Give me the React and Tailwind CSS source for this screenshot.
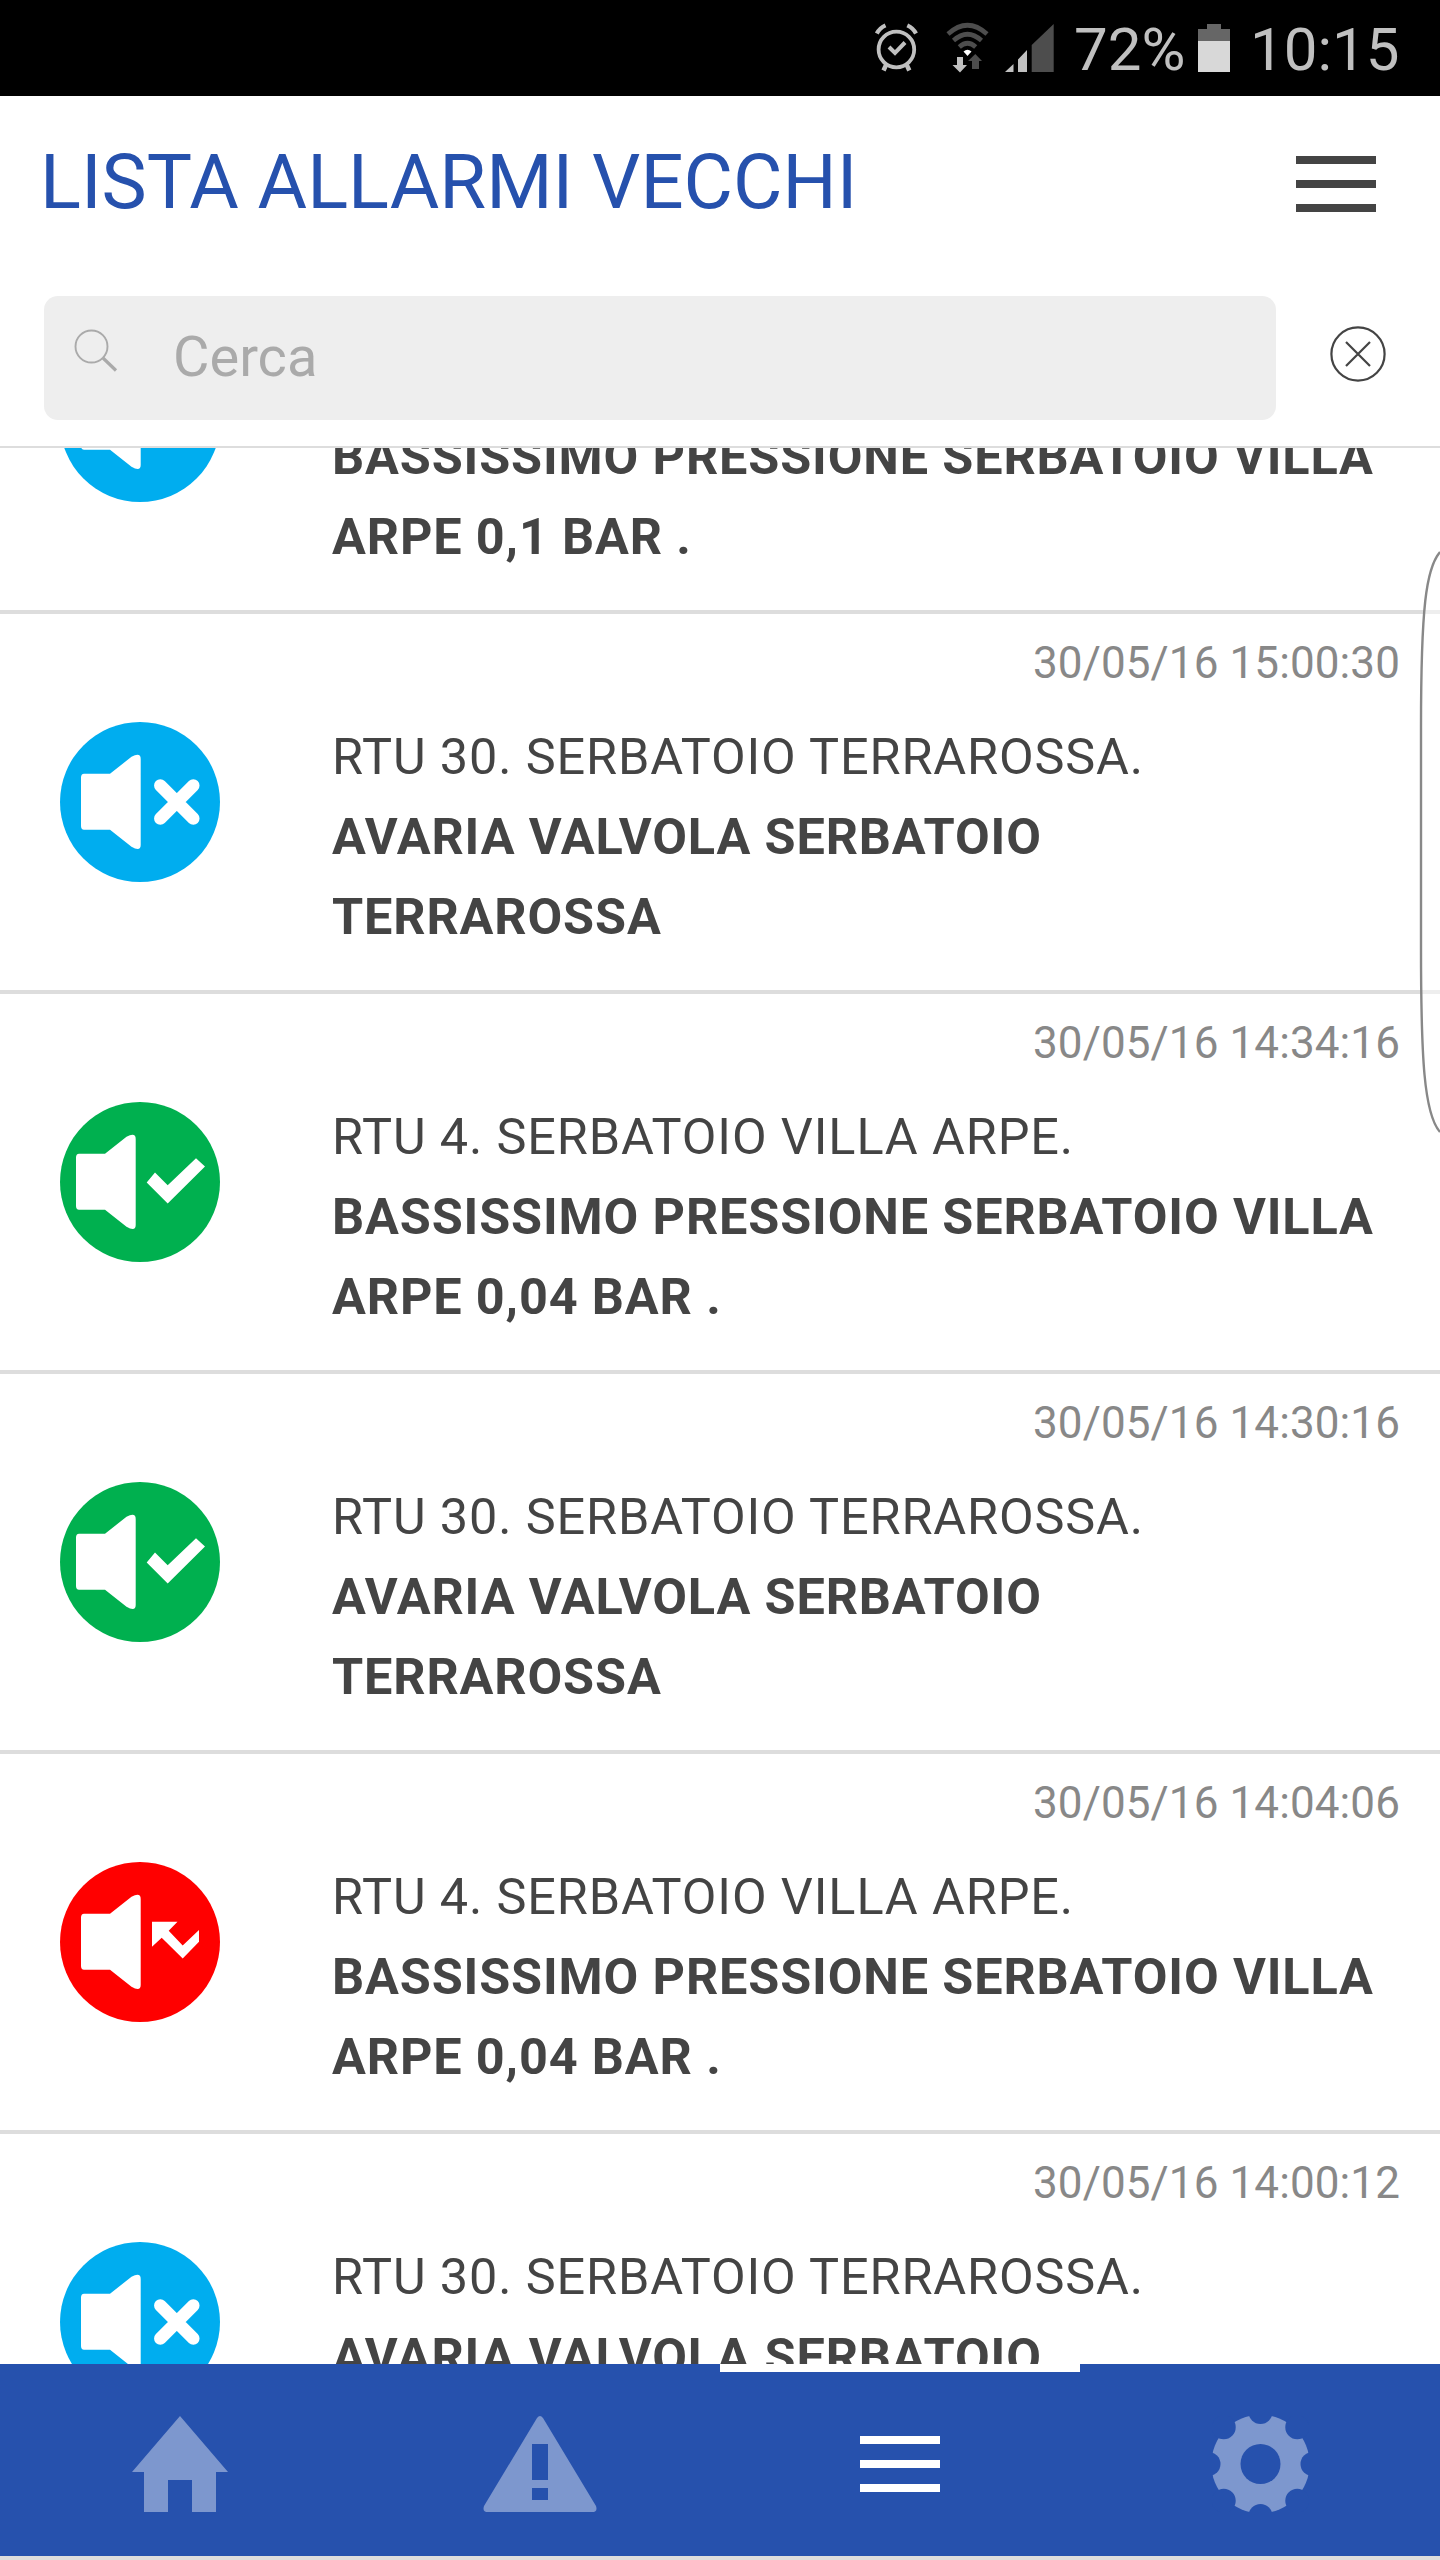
const alarms = [
  { time: '30/05/16 15:04:30', status: 'off', title: 'RTU 4. SERBATOIO VILLA ARPE.', text: 'BASSISSIMO PRESSIONE SERBATOIO VILLA ARPE 0,1 BAR .' },
  { time: '30/05/16 15:00:30', status: 'off', title: 'RTU 30. SERBATOIO TERRAROSSA.', text: 'AVARIA VALVOLA SERBATOIO TERRAROSSA' },
  { time: '30/05/16 14:34:16', status: 'ack', title: 'RTU 4. SERBATOIO VILLA ARPE.', text: 'BASSISSIMO PRESSIONE SERBATOIO VILLA ARPE 0,04 BAR .' },
  { time: '30/05/16 14:30:16', status: 'ack', title: 'RTU 30. SERBATOIO TERRAROSSA.', text: 'AVARIA VALVOLA SERBATOIO TERRAROSSA' },
  { time: '30/05/16 14:04:06', status: 'missed', title: 'RTU 4. SERBATOIO VILLA ARPE.', text: 'BASSISSIMO PRESSIONE SERBATOIO VILLA ARPE 0,04 BAR .' },
  { time: '30/05/16 14:00:12', status: 'off', title: 'RTU 30. SERBATOIO TERRAROSSA.', text: 'AVARIA VALVOLA SERBATOIO TERRAROSSA' },
]

const colors = { off: '#00adef', ack: '#00b04f', missed: '#ff0000' }

function AlarmIcon({ status }) {
  return (
    <svg viewBox="0 0 160 160" className="w-40 h-40 shrink-0" fill="#fff">
      <circle cx="80" cy="80" r="80" fill={colors[status]} />
      <path
        transform={status === 'ack' ? 'translate(-5 0)' : undefined}
        d="M24 51.7H50L71.5 34.8Q80.7 30 80.7 37V123Q80.7 130 71.5 124.8L50 107.7H24Q21 107.7 21 104V55.5Q21 51.7 24 51.7Z"
      />
      {status === 'off' && (
        <path d="M100.3 63.5L133.3 96.5M133.3 63.5L100.3 96.5" stroke="#fff" strokeWidth="12.5" strokeLinecap="round" />
      )}
      {status === 'ack' && <path d="M86.7 80.5L95 70.5L107.7 83.3L136 56.3L145 64.5L107.7 101.5Z" />}
      {status === 'missed' && (
        <path d="M92 59.7H117.5L108.7 68.7L122.7 83.5L139 68V79.7L122.7 96.5L101.7 75.7L92 84.7Z" />
      )}
    </svg>
  )
}

function StatusBar() {
  return (
    <div className="h-24 bg-black text-[#c0c0c0] text-[60px] leading-[92px] flex items-center shrink-0">
      <svg viewBox="870 0 190 96" className="w-[190px] h-24 ml-[870px]" fill="none">
        {/* alarm clock */}
        <g stroke="#c0c0c0">
          <circle cx="896.4" cy="49.5" r="17.8" strokeWidth="3.8" />
          <path d="M889 47L895 53L905 42.5" strokeWidth="4" />
          <path d="M876.8 33.5Q879.5 28 885.5 25.3M907.3 25.3Q913.3 28 916 33.5" strokeWidth="4.2" />
          <path d="M886.5 64L883.5 70.5M906.3 64L909.3 70.5" strokeWidth="4.5" />
        </g>
        {/* wifi */}
        <g stroke="#4d4d4d" strokeWidth="4.6">
          <path d="M948 34Q967.5 16.5 987 34" />
          <path d="M953.5 40.5Q967.5 28 981.5 40.5" />
          <path d="M959.3 47Q967.5 39.5 975.7 47" />
        </g>
        <path d="M963.5 51.5Q967.5 48 971.5 51.5L967.5 56Z" fill="#fff" />
        <path d="M957 57H963V65H967L960 72.5L952.5 65H957Z" fill="#c0c0c0" />
        <path d="M972 69V61H968L975.3 54L982 61H979V69Z" fill="#4d4d4d" />
        {/* signal */}
        <path d="M1005 72L1013.5 64V72ZM1018 72V59.5L1027 50V72Z" fill="#c0c0c0" />
        <path d="M1031.7 72V45L1053.7 24V72Z" fill="#4d4d4d" />
      </svg>
      <span className="ml-[14px] pt-1 w-[124px] whitespace-nowrap">72%</span>
      <svg viewBox="0 0 32 48" className="w-8 h-12" shapeRendering="crispEdges">
        <path d="M9 0H23V5H32V17H0V5H9Z" fill="#666" />
        <path d="M0 17H32V48H0Z" fill="#d8d8d8" />
      </svg>
      <span className="ml-5 pt-1 whitespace-nowrap">10:15</span>
    </div>
  )
}

function Header() {
  return (
    <header className="h-[352px] shrink-0 border-b-2 border-[#ddd]">
      <div className="h-[200px] pl-10 pr-16 flex items-start justify-between">
        <h1 className="mt-9 text-[76px] leading-[100px] text-[#2651ad] whitespace-nowrap">LISTA ALLARMI VECCHI</h1>
        <button className="mt-[60px] w-20 flex flex-col gap-4">
          <span className="h-2 bg-[#444]" />
          <span className="h-2 bg-[#444]" />
          <span className="h-2 bg-[#444]" />
        </button>
      </div>
      <div className="pl-11 flex items-start">
        <div className="w-[1232px] h-[124px] rounded-[14px] bg-[#eee] flex items-center">
          <svg viewBox="0 0 44 44" className="w-11 h-11 ml-[30px] mb-[14px]" fill="none" stroke="#aaa">
            <circle cx="17.5" cy="17.5" r="16" strokeWidth="1.9" />
            <path d="M29 29L42 41.5" strokeWidth="3.2" />
          </svg>
          <span className="ml-[55px] mb-[3px] text-[56px] text-[#aaa]">Cerca</span>
        </div>
        <svg viewBox="0 0 56 56" className="w-14 h-14 ml-[54px] mt-[30px]" fill="none" stroke="#444" strokeWidth="2.2">
          <circle cx="28" cy="28" r="26.6" />
          <path d="M16 16L40 40M40 16L16 40" />
        </svg>
      </div>
    </header>
  )
}

function AlarmRow({ alarm }) {
  return (
    <li className="h-[380px] border-b-4 border-[#ddd] text-[#444]">
      <p className="h-[103px] pr-10 pt-[22px] text-right text-[44px] leading-[54px] tracking-[0.1px] text-[#888]">
        {alarm.time}
      </p>
      <div className="flex pl-[60px]">
        <div className="pt-[5px] mr-28">
          <AlarmIcon status={alarm.status} />
        </div>
        <div className="w-[1050px] text-[50.4px] leading-[80px] tracking-[0.87px]">
          <p>{alarm.title}</p>
          <p className="font-bold">{alarm.text}</p>
        </div>
      </div>
    </li>
  )
}

function TabBar() {
  return (
    <nav className="h-[196px] shrink-0 grid grid-cols-4 bg-[#2651ad] border-b-4 border-[#ddd]">
      <div className="flex justify-center pt-[52px]">
        <svg viewBox="0 0 96 96" className="w-24 h-24" fill="#7d97ce">
          <path d="M48 0L96 56H84V96H60V64H36V96H12V56H0Z" />
        </svg>
      </div>
      <div className="flex justify-center pt-[52px]">
        <svg viewBox="0 0 114 96" className="w-[114px] h-24" fill="#7d97ce" fillRule="evenodd">
          <path d="M54 2Q57 -2 60 2L113 90Q115 96 109 96H5Q-1 96 1 90ZM49 28V64H65V28ZM49 72V84H65V72Z" />
        </svg>
      </div>
      <div className="border-t-8 border-white flex flex-col items-center gap-4 pt-16">
        <span className="w-20 h-2 bg-white" />
        <span className="w-20 h-2 bg-white" />
        <span className="w-20 h-2 bg-white" />
      </div>
      <div className="flex justify-center pt-[52px]">
        <svg viewBox="-48.5 -48 97 96" className="w-[97px] h-24" fill="#2651ad">
          <circle r="49.2" fill="#7d97ce" />
          <circle r="20" />
          {[0, 45, 90, 135, 180, 225, 270, 315].map((a) => (
            <circle key={a} cy="-52" r="12" transform={`rotate(${a})`} />
          ))}
        </svg>
      </div>
    </nav>
  )
}

export default function App() {
  return (
    <div className="relative w-[1440px] h-[2560px] overflow-hidden flex flex-col bg-white font-['Roboto',sans-serif]">
      <StatusBar />
      <Header />
      <main className="flex-1 min-h-0 overflow-hidden">
        <ul className="-mt-[214px]">
          {alarms.map((alarm) => (
            <AlarmRow key={alarm.time} alarm={alarm} />
          ))}
        </ul>
      </main>
      <TabBar />
      {/* edge panel handle */}
      <svg viewBox="0 0 24 588" className="absolute right-0 top-[548px] w-6 h-[588px]">
        <path d="M24 4C10 20 5 60 5 180V400C5 510 8 566 24 584" fill="#fff" fillOpacity="0.5" stroke="#888" strokeWidth="2.4" />
      </svg>
    </div>
  )
}
